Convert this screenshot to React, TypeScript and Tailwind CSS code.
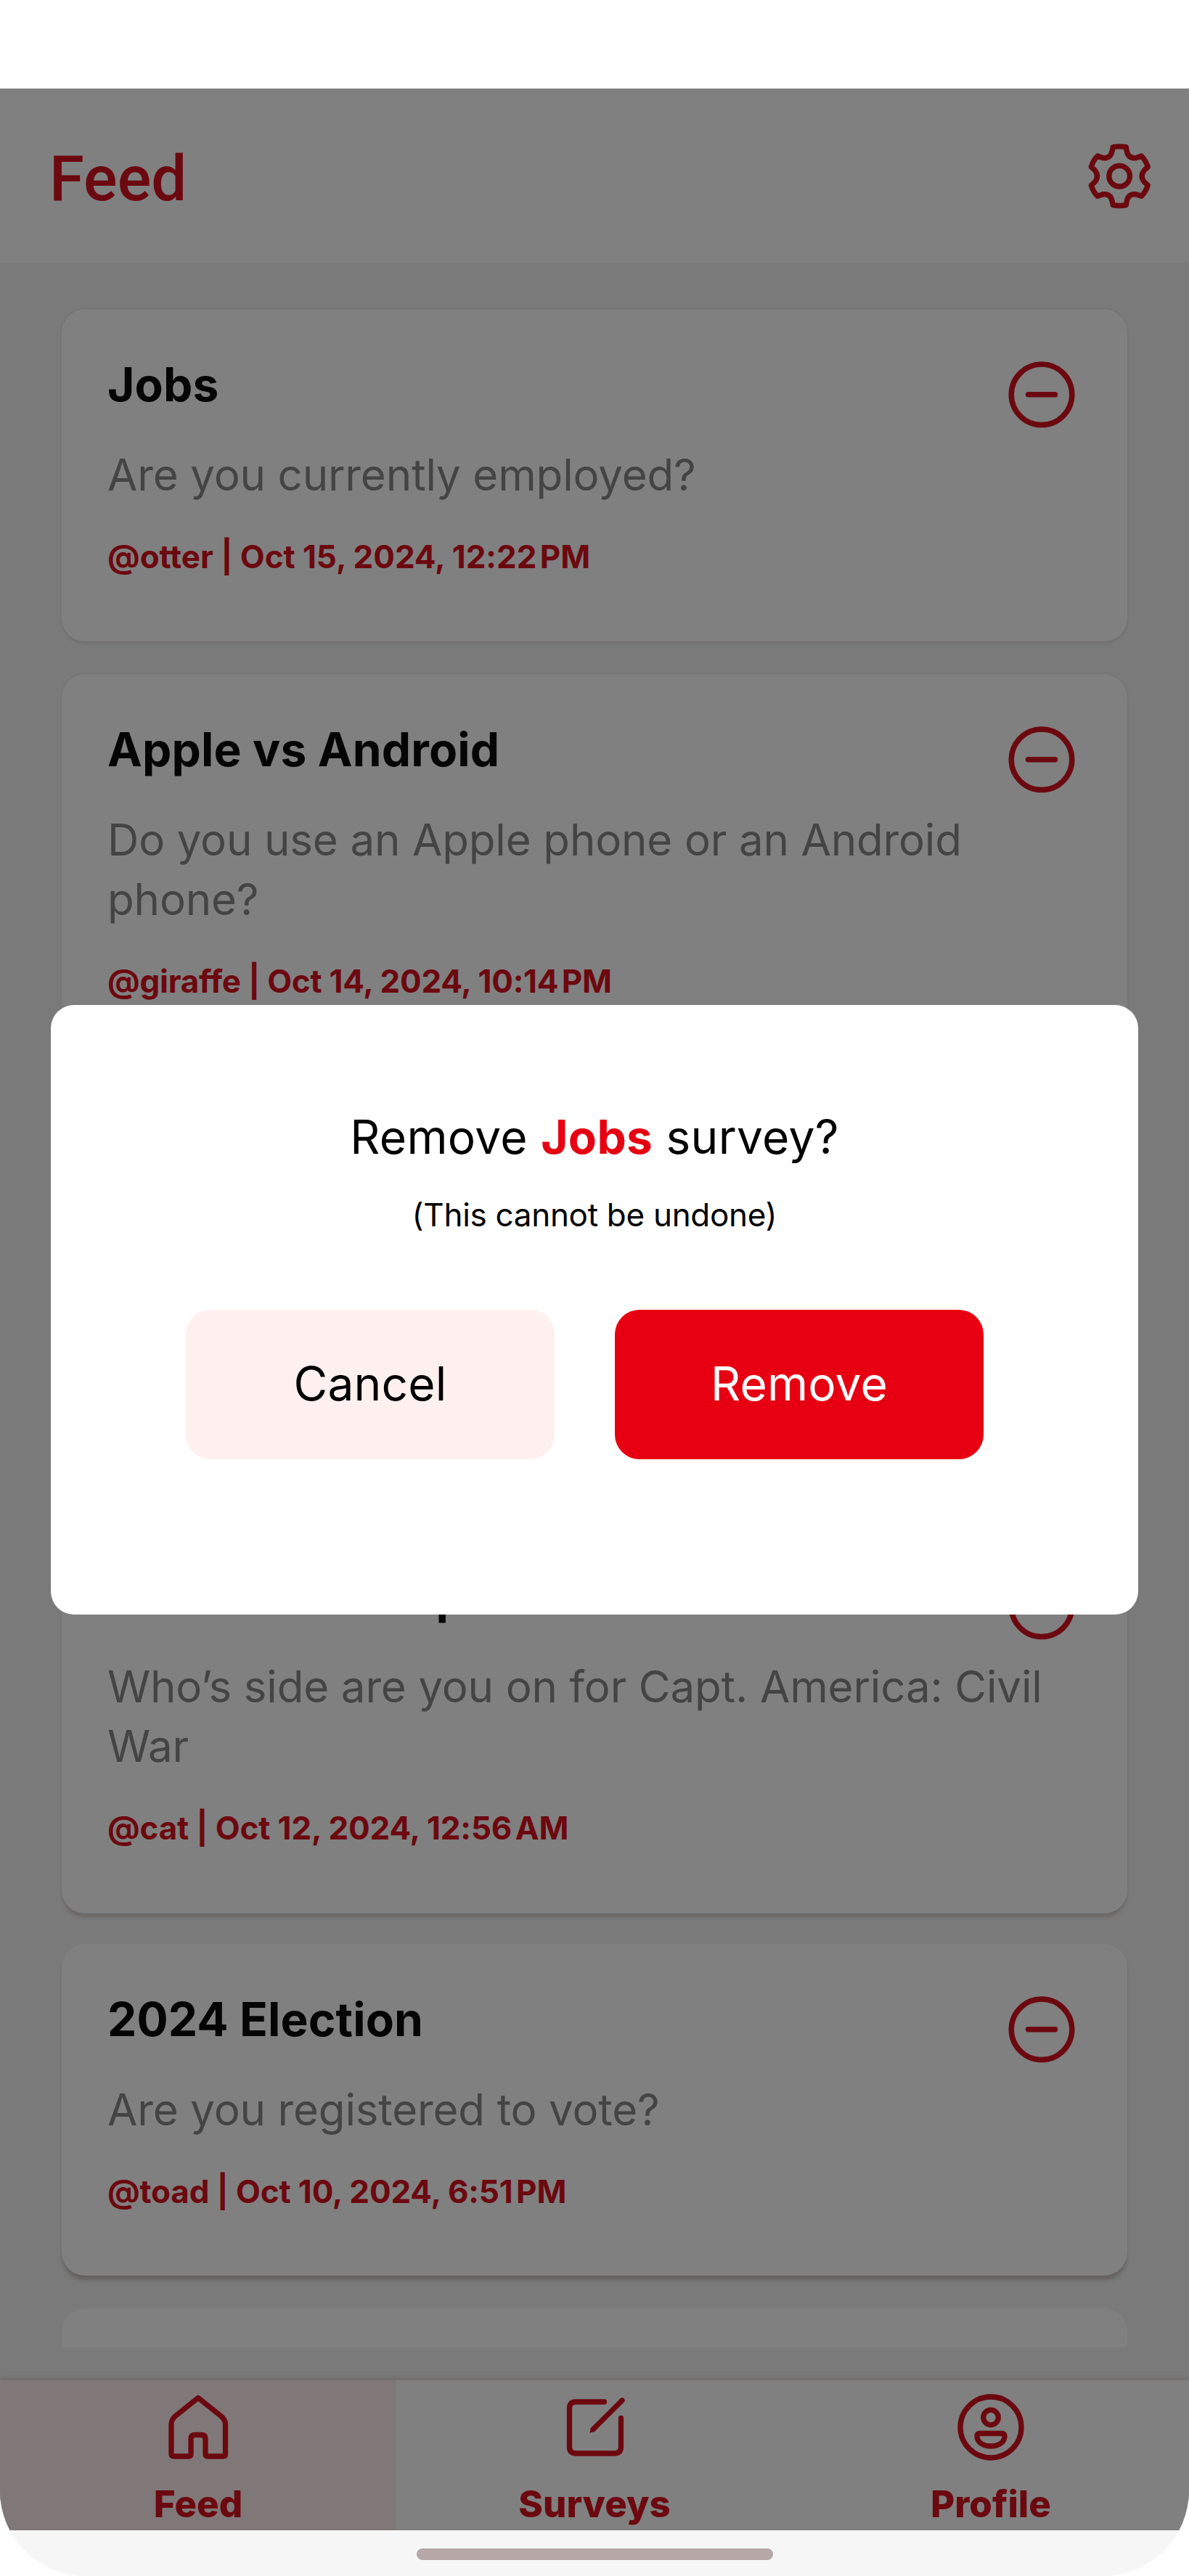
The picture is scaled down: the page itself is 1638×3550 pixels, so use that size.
const INK = '#6c080f';

function MinusCircle() {
  return (
    <svg width="92" height="92" viewBox="0 0 92 92" fill="none" stroke={INK} strokeWidth="7.5" strokeLinecap="round">
      <circle cx="46" cy="45.8" r="41.8" />
      <path d="M27.5 45.8h37" />
    </svg>
  );
}

function Gear() {
  return (
    <svg width="88" height="94" viewBox="480 288 264 282" fill="none" stroke={INK} strokeWidth="22" strokeLinejoin="round">
      <path d="M586 308Q612 303 640 308L643 326Q650 356 680 353L703 345Q722 364 730 390L715 404Q696 428 715 452L730 466Q722 492 703 511L680 503Q650 500 643 530L640 548Q612 553 586 548L582 530Q575 500 545 503L522 511Q503 492 496 466L511 452Q530 428 511 404L496 390Q503 364 522 345L545 353Q575 356 582 326Z" />
      <circle cx="612.5" cy="428" r="43" />
    </svg>
  );
}

function HomeIcon() {
  return (
    <svg width="96" height="96" viewBox="0 0 96 96" fill="none" stroke={INK} strokeWidth="7.3" strokeLinejoin="round">
      <path d="M48 7.5L80 33Q85.5 38 85.5 44V85Q85.5 88 82.5 88H61.5Q58 88 58 85V64Q58 58.5 52 58.5H44Q38 58.5 38 64V85Q38 88 35 88H14Q11 88 11 85V44Q11 38 16 33Z" />
    </svg>
  );
}

function SurveyIcon() {
  return (
    <svg width="96" height="96" viewBox="0 0 96 96" fill="none" stroke={INK} strokeWidth="7.3" strokeLinecap="round" strokeLinejoin="round">
      <path d="M61.5 13H22.5Q13.5 13 13.5 22V75Q13.5 84 22.5 84H75.5Q84.5 84 84.5 75V35.5" />
      <path d="M46 51L86 11" />
      <path d="M42 55L46 47L50 51Z" strokeWidth="1.5" fill={INK} />
    </svg>
  );
}

function ProfileIcon() {
  return (
    <svg width="96" height="96" viewBox="0 0 96 96" fill="none" stroke={INK} strokeWidth="7.3" strokeLinejoin="round">
      <circle cx="48" cy="48" r="42" />
      <circle cx="48" cy="34.5" r="10.3" />
      <path d="M33 56.5H63Q67 56.5 67 60.5C67 69 58 74 48 74S29 69 29 60.5Q29 56.5 33 56.5Z" />
    </svg>
  );
}

type CardProps = {
  title: string;
  text: string;
  author: string;
  date: string;
  period: string;
  className: string;
  titleClass?: string;
  metaClass?: string;
};

function SurveyCard({
  title,
  text,
  author,
  date,
  period,
  className,
  titleClass = 'tracking-[0.15px]',
  metaClass = 'tracking-[-0.15px]',
}: CardProps) {
  return (
    <article className={`flex shrink-0 items-start justify-between rounded-[32px] bg-[#808080] pl-[63px] pr-[72px] ${className}`}>
      <div className="flex flex-col pt-[64px]">
        <h2 className={`whitespace-nowrap text-[64px] font-bold leading-[80px] text-[#050505] ${titleClass}`}>{title}</h2>
        <p className="mt-[43px] whitespace-pre text-[60px] leading-[82px] tracking-[-0.15px] text-[#444444]">{text}</p>
        <p className={`mt-[45px] whitespace-nowrap text-[44px] font-bold leading-[54px] text-[#6c080f] ${metaClass}`}>
          {author} | {date}
          <span className="tracking-[-2.5px]">{'\u202f'}</span>
          {period}
        </p>
      </div>
      <div className="-ml-[200px] pt-[72px]"><MinusCircle /></div>
    </article>
  );
}

export default function App() {
  return (
    <div className="relative h-[3550px] w-[1638px] overflow-hidden bg-white font-['Inter',sans-serif]">
      <div className="flex h-full flex-col overflow-hidden rounded-[118px]">
        <div className="h-[122px] shrink-0 bg-white" />
        <header className="flex h-[240px] shrink-0 items-center justify-between bg-[#808080] pl-[68px] pr-[52px] pt-[2px]">
          <h1 className="pt-[6px] font-['Roboto',sans-serif] text-[87px] font-medium leading-[100px] text-[#6c080f]">Feed</h1>
          <Gear />
        </header>

        <main className="flex h-[2918px] shrink-0 flex-col bg-[#7a7a7a]">
          <div className="flex h-[2873px] flex-col overflow-hidden px-[85px] pt-[64px]">
            <SurveyCard className="h-[458px] shadow-[0_3px_4px_-1px_#6f6b6b,0_-1px_2px_0_#757070]" title="Jobs" text="Are you currently employed?" author="@otter" date="Oct 15, 2024, 12:22" period="PM" metaClass="tracking-[-0.05px]" />
            <SurveyCard className="mt-[45px] h-[540px] shadow-[0_3px_4px_-1px_#6f6b6b,0_-1px_2px_0_#757272]" title="Apple vs Android" text={'Do you use an Apple phone or an Android\nphone?'} author="@giraffe" date="Oct 14, 2024, 10:14" period="PM" metaClass="tracking-[-0.25px]" />
            <div className="mt-[45px] h-[540px] shrink-0 rounded-[32px] bg-[#808080]" />
            <SurveyCard className="mt-[42px] h-[541px] shadow-[0_6px_5px_-1px_#6a6664]" title="Iron Man vs Cap" titleClass="tracking-[-0.7px]" text={'Who’s side are you on for Capt. America: Civil\nWar'} author="@cat" date="Oct 12, 2024, 12:56" period="AM" />
            <SurveyCard className="mt-[42px] h-[457px] shadow-[0_7px_5px_-1px_#656160]" title="2024 Election" text="Are you registered to vote?" author="@toad" date="Oct 10, 2024, 6:51" period="PM" />
            <div className="mt-[45px] h-[200px] shrink-0 rounded-[32px] bg-[#808080]" />
          </div>
        </main>

        <nav className="grid h-[207px] shrink-0 grid-cols-3 bg-[#808080] text-[51px] font-extrabold leading-[64px] text-[#6c080f] shadow-[0_-2px_6px_1px_#6f6c69]">
          <div className="flex flex-col items-center bg-[#807878] pt-[17px]"><HomeIcon /><span className="mt-[26px]">Feed</span></div>
          <div className="flex flex-col items-center pt-[17px]"><SurveyIcon /><span className="mt-[26px]">Surveys</span></div>
          <div className="flex flex-col items-center pt-[17px]"><ProfileIcon /><span className="mt-[26px]">Profile</span></div>
        </nav>
        <div className="flex h-[63px] shrink-0 justify-center bg-[#f6f6f6] pt-[25px]">
          <div className="h-[16px] w-[491px] rounded-[8px] bg-[#b7a8a8]" />
        </div>
      </div>

      <section role="dialog" className="absolute left-[70px] top-[1385px] flex h-[840px] w-[1498px] flex-col items-center rounded-[32px] bg-white text-black">
        <p className="mt-[142px] text-[64px] leading-[80px] tracking-[0.3px]">
          Remove <strong className="font-bold text-[#e60012]">Jobs</strong> survey?
        </p>
        <p className="mt-[39px] text-[44px] leading-[56px] tracking-[-0.3px]">(This cannot be undone)</p>
        <div className="mt-[103px] flex gap-[83px] self-start pl-[186px] text-[64px] tracking-[0.2px]">
          <button className="h-[206px] w-[508px] rounded-[34px] bg-[#fff0f0] pb-[3px]">Cancel</button>
          <button className="h-[206px] w-[508px] rounded-[34px] bg-[#e60012] pb-[3px] text-white">Remove</button>
        </div>
      </section>
    </div>
  );
}
